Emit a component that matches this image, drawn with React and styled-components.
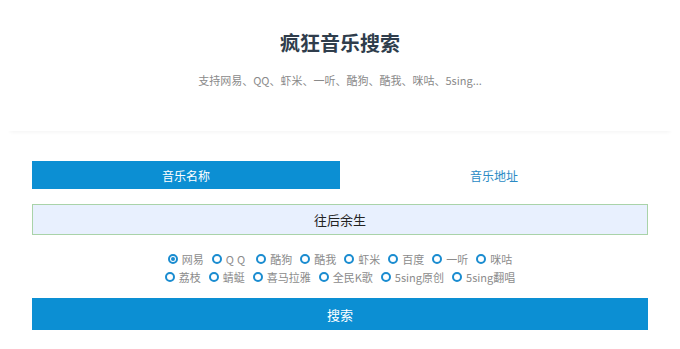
import React, { useState } from "react";
import styled, { createGlobalStyle } from "styled-components";

const GlobalStyle = createGlobalStyle`
  body {
    margin: 8px;
    background: #fff;
    font-family: "Noto Sans CJK SC", "Noto Sans", "Liberation Sans", sans-serif;
  }
  * { box-sizing: border-box; }
`;

const Header = styled.header`
  padding: 21px 0 42px;
  text-align: center;
  box-shadow: 0 3px 4px -2px rgba(0, 0, 0, 0.05);
`;

const Title = styled.h1`
  margin: 0;
  font-size: 20px;
  line-height: 28px;
  font-weight: 700;
  color: #2f3d4c;
`;

const Subtitle = styled.p`
  margin: 14px 0 0;
  font-size: 11px;
  line-height: 18px;
  color: #8a8a8a;
`;

const Main = styled.main`
  padding: 30px 24px 0;
`;

const Tabs = styled.div`
  display: flex;
`;

const Tab = styled.button`
  flex: 1;
  height: 28px;
  border: none;
  font: inherit;
  font-size: 12px;
  cursor: pointer;
  background: ${(p) => (p.$active ? "#0c8fd3" : "transparent")};
  color: ${(p) => (p.$active ? "#fff" : "#2a8ac4")};
`;

const Input = styled.input`
  display: block;
  width: 100%;
  height: 31px;
  margin-top: 15px;
  border: 1px solid #a9d3a9;
  background: #e8f0fe;
  font: inherit;
  font-size: 13px;
  color: #222;
  text-align: center;
  outline: none;
`;

const Radios = styled.div`
  display: flex;
  flex-wrap: wrap;
  justify-content: center;
  column-gap: 8px;
  width: 360px;
  margin: 15px auto 0;
`;

const RadioLabel = styled.label`
  display: flex;
  align-items: center;
  gap: 4px;
  height: 18px;
  font-size: 11px;
  color: #8c8c8c;
  cursor: pointer;
  letter-spacing: ${(p) => (p.$spaced ? "3px" : "0")};
`;

const Circle = styled.span`
  position: relative;
  width: 10px;
  height: 10px;
  border: 2px solid #1a8cd0;
  border-radius: 50%;
  flex: none;
  &::after {
    content: "";
    display: ${(p) => (p.$checked ? "block" : "none")};
    position: absolute;
    left: 1px;
    top: 1px;
    width: 4px;
    height: 4px;
    border-radius: 50%;
    background: #1a8cd0;
  }
`;

const SearchButton = styled.button`
  display: block;
  width: 100%;
  height: 32px;
  margin-top: 12px;
  border: none;
  background: #0c8fd3;
  color: #fff;
  font: inherit;
  font-size: 13px;
  cursor: pointer;
`;

const sources = [
  "网易", "QQ", "酷狗", "酷我", "虾米", "百度", "一听", "咪咕",
  "荔枝", "蜻蜓", "喜马拉雅", "全民K歌", "5sing原创", "5sing翻唱",
];

export default function App() {
  const [tab, setTab] = useState(0);
  const [source, setSource] = useState("网易");
  const [query, setQuery] = useState("往后余生");

  return (
    <>
      <GlobalStyle />
      <Header>
        <Title>疯狂音乐搜索</Title>
        <Subtitle>支持网易、QQ、虾米、一听、酷狗、酷我、咪咕、5sing...</Subtitle>
      </Header>
      <Main>
        <Tabs>
          <Tab $active={tab === 0} onClick={() => setTab(0)}>音乐名称</Tab>
          <Tab $active={tab === 1} onClick={() => setTab(1)}>音乐地址</Tab>
        </Tabs>
        <Input value={query} onChange={(e) => setQuery(e.target.value)} />
        <Radios>
          {sources.map((s) => (
            <RadioLabel key={s} $spaced={s === "QQ"} onClick={() => setSource(s)}>
              <Circle $checked={source === s} />
              {s}
            </RadioLabel>
          ))}
        </Radios>
        <SearchButton>搜索</SearchButton>
      </Main>
    </>
  );
}
